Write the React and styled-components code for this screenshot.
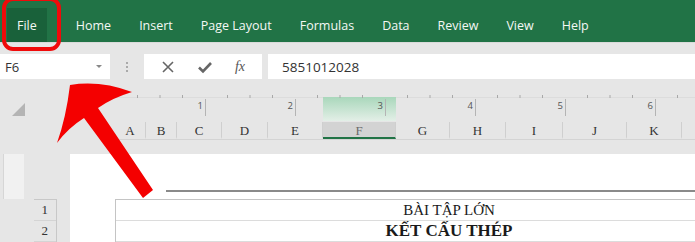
import React from 'react';
import styled, { createGlobalStyle } from 'styled-components';

const GlobalStyle = createGlobalStyle`
     html, body {
          margin: 0;
          padding: 0;
          background: #e6e6e6;
     }
     body {
          width: 695px;
          height: 242px;
          overflow: hidden;
          font-family: 'Open Sans', 'Noto Sans', sans-serif;
     }
`;

const Screen = styled.div`
     position: relative;
     width: 695px;
     height: 242px;
     overflow: hidden;
     background: #e6e6e6;
`;

/* ribbon tabs */
const Ribbon = styled.div`
     display: flex;
     align-items: stretch;
     height: 42px;
     box-sizing: border-box;
     background: #217346;
     padding: 8px 0 0 7px;
`;

const Tab = styled.div`
     display: flex;
     align-items: center;
     padding: ${(p) => (p.active ? '3px 10px 0' : '3px 14px 0')};
     margin-right: ${(p) => (p.active ? '15px' : '0')};
     background: ${(p) => (p.active ? '#19613a' : 'transparent')};
     color: #f4f8f5;
     font-size: 12.5px;
     line-height: 1;
`;

/* formula bar */
const FormulaBar = styled.div`
     display: flex;
     align-items: center;
     height: 50px;
     box-sizing: border-box;
     padding-bottom: 2px;
     border-top: 1px solid #dadada;
`;

const NameBox = styled.div`
     display: flex;
     align-items: center;
     justify-content: space-between;
     width: 110px;
     height: 25px;
     box-sizing: border-box;
     padding: 0 8px 0 5px;
     background: #fff;
     color: #333;
     font-size: 13px;
`;

const Caret = styled.span`
     width: 0;
     height: 0;
     border-left: 3px solid transparent;
     border-right: 3px solid transparent;
     border-top: 3px solid #888;
`;

const Grip = styled.div`
     display: flex;
     flex-direction: column;
     gap: 2px;
     margin: 0 16px;

     span {
          width: 2px;
          height: 2px;
          background: #aaa;
     }
`;

const ActionBox = styled.div`
     display: flex;
     align-items: center;
     justify-content: space-around;
     width: 118px;
     height: 25px;
     padding: 0 6px;
     box-sizing: border-box;
     background: #fff;
     margin-right: 6px;
`;

const Fx = styled.span`
     font-family: 'Liberation Serif', serif;
     font-style: italic;
     font-size: 14px;
     color: #555;
`;

const FormulaInput = styled.div`
     flex: 1;
     height: 25px;
     display: flex;
     align-items: center;
     padding-left: 14px;
     background: #fff;
     color: #333;
     font-size: 13.5px;
`;

/* column area */
const TopGrid = styled.div`
     display: grid;
     grid-template-columns: 115px 1fr;
     grid-template-rows: 30px 18px;
`;

const Corner = styled.div`
     grid-row: 1 / span 2;
     display: flex;
     align-items: flex-start;
     padding: 11px 0 0 12px;
`;

const Ruler = styled.svg`
     display: block;
`;

const HeaderRow = styled.div`
     display: flex;
     border-bottom: 1px solid #d4d4d4;
`;

const ColHead = styled.div`
     flex: none;
     display: flex;
     align-items: center;
     justify-content: center;
     box-sizing: border-box;
     padding-top: 2px;
     border-right: 1px solid #cfcfcf;
     background: ${(p) => (p.active ? '#d3d3d3' : 'transparent')};
     border-bottom: 2px solid ${(p) => (p.active ? '#217346' : 'transparent')};
     font-family: 'Liberation Serif', serif;
     font-size: 13px;
     color: ${(p) => (p.active ? '#6b6b6b' : '#333')};
`;

/* sheet area */
const Sheet = styled.div`
     display: flex;
     margin-top: 14px;
     height: 120px;
`;

const Gutter = styled.div`
     display: flex;
     width: 70px;
     flex: none;
`;

const VRuler = styled.div`
     width: 20px;
     margin-left: 3px;
     height: 45px;
     background: #f1f1f1;
     border-left: 1px solid #d6d6d6;
`;

const RowHeads = styled.div`
     display: flex;
     flex-direction: column;
     margin: 45px 0 0 10px;
     width: 22px;
     border-top: 1px solid #c8c8c8;
     border-right: 1px solid #c8c8c8;
`;

const RowHead = styled.div`
     height: 21px;
     box-sizing: border-box;
     display: flex;
     align-items: center;
     justify-content: flex-end;
     padding-right: 8px;
     border-bottom: 1px solid #d4d4d4;
     font-family: 'Liberation Serif', serif;
     font-size: 13px;
     color: #333;
`;

const Page = styled.div`
     flex: 1;
     background: #fff;
     padding-top: 36px;
     overflow: hidden;
`;

const HeaderLine = styled.div`
     margin-left: 96px;
     height: 2px;
     background: #8a8a8a;
`;

const Table = styled.div`
     margin: 7px 0 0 45px;
     width: 666px;
     border-top: 1px solid #c4c4c4;
     border-left: 1px solid #c4c4c4;
`;

const TitleRow = styled.div`
     height: 21px;
     box-sizing: border-box;
     display: flex;
     align-items: center;
     justify-content: center;
     border-bottom: 1px solid #dcdcdc;
     font-family: 'Liberation Serif', serif;
     font-size: ${(p) => (p.bold ? '17px' : '15px')};
     font-weight: ${(p) => (p.bold ? 700 : 400)};
     color: #1a1a1a;
`;

const Overlay = styled.svg`
     position: absolute;
     top: 0;
     left: 0;
     pointer-events: none;
`;

const tabs = ['File', 'Home', 'Insert', 'Page Layout', 'Formulas', 'Data', 'Review', 'View', 'Help'];

const columns = [
     ['A', 31], ['B', 31], ['C', 45], ['D', 46], ['E', 55], ['F', 73],
     ['G', 54], ['H', 56], ['I', 57], ['J', 64], ['K', 55], ['', 40],
];

const RulerDrawing = () => {
     const ticks = [];
     for (let i = 1; i < 28; i++) {
          if (i % 4 === 0) continue;
          const x = i * 22.5;
          ticks.push(<line key={i} x1={x} y1={3} x2={x} y2={6} stroke="#a8a8a8" strokeWidth="1" />);
     }
     return (
          <Ruler width="580" height="30">
               <defs>
                    <linearGradient id="sel" x1="0" y1="0" x2="0" y2="1">
                         <stop offset="0" stopColor="#a9d7bb" />
                         <stop offset="1" stopColor="#e3efe7" />
                    </linearGradient>
               </defs>
               <line x1="0" y1="5.5" x2="580" y2="5.5" stroke="#dcdcdc" />
               <rect x="208" y="5" width="73" height="24" fill="url(#sel)" />
               {ticks}
               {[1, 2, 3, 4, 5, 6].map((n) => {
                    const x = n * 90;
                    return (
                         <g key={n}>
                              <line x1={x + 0.5} y1={7} x2={x + 0.5} y2={24} stroke="#b4b4b4" />
                              <text x={x - 2} y={17} fontSize="9.5" fill="#555" textAnchor="end" fontFamily="Open Sans, sans-serif">
                                   {n}
                              </text>
                         </g>
                    );
               })}
          </Ruler>
     );
};

const App = () => {
     return (
          <Screen>
               <GlobalStyle />
               <Ribbon>
                    {tabs.map((t, i) => (
                         <Tab key={t} active={i === 0}>
                              {t}
                         </Tab>
                    ))}
               </Ribbon>

               <FormulaBar>
                    <NameBox>
                         F6
                         <Caret />
                    </NameBox>
                    <Grip>
                         <span />
                         <span />
                         <span />
                    </Grip>
                    <ActionBox>
                         <svg width="14" height="14" viewBox="0 0 14 14">
                              <path d="M2 2 L12 12 M12 2 L2 12" stroke="#666" strokeWidth="1.6" />
                         </svg>
                         <svg width="16" height="14" viewBox="0 0 16 14">
                              <path d="M2 7.5 L6 11.5 L14 3" stroke="#666" strokeWidth="2.6" fill="none" />
                         </svg>
                         <Fx>fx</Fx>
                    </ActionBox>
                    <FormulaInput>5851012028</FormulaInput>
               </FormulaBar>

               <TopGrid>
                    <Corner>
                         <svg width="14" height="13" viewBox="0 0 14 13">
                              <path d="M13 0 L13 13 L0 13 Z" fill="#b4b4b4" />
                         </svg>
                    </Corner>
                    <RulerDrawing />
                    <HeaderRow>
                         {columns.map(([c, w]) => (
                              <ColHead key={c || 'x'} style={{ width: w }} active={c === 'F'}>
                                   {c}
                              </ColHead>
                         ))}
                    </HeaderRow>
               </TopGrid>

               <Sheet>
                    <Gutter>
                         <VRuler />
                         <RowHeads>
                              <RowHead>1</RowHead>
                              <RowHead>2</RowHead>
                         </RowHeads>
                    </Gutter>
                    <Page>
                         <HeaderLine />
                         <Table>
                              <TitleRow>BÀI TẬP LỚN</TitleRow>
                              <TitleRow bold>KẾT CẤU THÉP</TitleRow>
                         </Table>
                    </Page>
               </Sheet>

               {/* annotation: red frame and arrow */}
               <Overlay width="695" height="242" viewBox="0 0 695 242">
                    <rect x="4" y="-1" width="55" height="50" rx="9" fill="none" stroke="#f00a0a" strokeWidth="4" />
                    <path
                         d="M70 85 Q100 80 132 92 Q112 98 98 108 L153 190 L143 198 L84 118 Q68 128 57 143 Q66 118 70 85 Z"
                         fill="#f40000"
                    />
               </Overlay>
          </Screen>
     );
};

export default App;
